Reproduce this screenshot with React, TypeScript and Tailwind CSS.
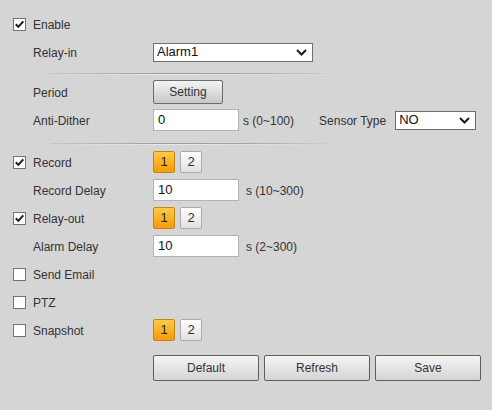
import React from "react";

const font = { fontFamily: '"Liberation Sans", Arial, sans-serif' };

function Check({ checked }: { checked: boolean }) {
  return (
    <div className="w-[13px] h-[13px] border border-[#737373] bg-white flex items-center justify-center shrink-0">
      {checked && (
        <svg width="11" height="11" viewBox="0 0 11 11">
          <path d="M1.8 5.3 L4.3 7.9 L9.3 2.3" fill="none" stroke="#1a1a1a" strokeWidth="2" />
        </svg>
      )}
    </div>
  );
}

function Chevron() {
  return (
    <svg width="11" height="7" viewBox="0 0 11 7" className="shrink-0">
      <path d="M1 1 L5.5 5.5 L10 1" fill="none" stroke="#1a1a1a" strokeWidth="2" />
    </svg>
  );
}

function Select({ value, w }: { value: string; w: string }) {
  return (
    <div className={`${w} h-[19px] border border-[#6f6f6f] bg-white flex items-center justify-between pl-[3px] pr-[5px] text-[13px] text-[#111]`}>
      <span>{value}</span>
      <Chevron />
    </div>
  );
}

function TextInput({ value }: { value: string }) {
  return (
    <div className="w-[86px] h-[22px] border border-[#b3b3b3] bg-white flex items-center pl-[4px] text-[13px] text-[#111]">
      {value}
    </div>
  );
}

function NumBtns() {
  return (
    <div className="flex gap-[5px]">
      <div className="w-[22px] h-[22px] rounded-[2px] border border-[#c48612] bg-[linear-gradient(#ffc947,#f59c08)] flex items-center justify-center text-[13px] text-[#222]">
        1
      </div>
      <div className="w-[22px] h-[22px] rounded-[2px] border border-[#ababab] bg-[linear-gradient(#fefefe,#e0e0e0)] flex items-center justify-center text-[13px] text-[#333]">
        2
      </div>
    </div>
  );
}

function Row({
  label,
  check,
  children,
}: {
  label: string;
  check?: boolean;
  children?: React.ReactNode;
}) {
  return (
    <div className="flex items-center h-[28px]">
      <div className="w-[153px] flex items-center pl-[13px] shrink-0">
        {check === undefined ? (
          <span className="pl-[20px] pt-[2px]">{label}</span>
        ) : (
          <>
            <Check checked={check} />
            <span className="ml-[7px] pt-[2px]">{label}</span>
          </>
        )}
      </div>
      {children}
    </div>
  );
}

function Divider({ top, h }: { top: string; h: string }) {
  return (
    <div className={`${h} ${top}`}>
      <div className="ml-[50px] w-[290px] h-[1px] bg-[linear-gradient(90deg,rgba(150,150,150,0.2),#9c9c9c_40%,#a8a8a8_70%,rgba(170,170,170,0))]" />
      <div className="ml-[50px] w-[290px] h-[1px] bg-[linear-gradient(90deg,rgba(255,255,255,0),rgba(235,235,235,0.9)_40%,rgba(230,230,230,0.5)_75%,rgba(255,255,255,0))]" />
    </div>
  );
}

function BigBtn({ label }: { label: string }) {
  return (
    <div className="w-[106px] h-[26px] rounded-[2px] border border-[#5e5e5e] bg-[linear-gradient(#f5f5f5,#d4d4d4)] flex items-center justify-center text-[12px] text-[#333]">
      {label}
    </div>
  );
}

export default function App() {
  return (
    <div style={font} className="w-[492px] h-[410px] bg-[#d5d5d5] text-[12px] text-[#333] pt-[10px] overflow-hidden">
      <Row label="Enable" check={true} />
      <Row label="Relay-in">
        <Select value="Alarm1" w="w-[160px]" />
      </Row>
      <Divider top="pt-[7px]" h="h-[12px]" />
      <Row label="Period">
        <div className="w-[70px] h-[24px] rounded-[2px] border border-[#6c6c6c] bg-[linear-gradient(#f4f4f4,#c6c6c6)] flex items-center justify-center text-[12px] text-[#333]">
          Setting
        </div>
      </Row>
      <Row label="Anti-Dither">
        <TextInput value="0" />
        <span className="ml-[4px] pt-[2px]">s (0~100)</span>
        <span className="ml-[25px] pt-[2px]">Sensor Type</span>
        <div className="ml-[9px]">
          <Select value="NO" w="w-[81px]" />
        </div>
      </Row>
      <Divider top="pt-[9px]" h="h-[14px]" />
      <Row label="Record" check={true}>
        <NumBtns />
      </Row>
      <Row label="Record Delay">
        <TextInput value="10" />
        <span className="ml-[7px] pt-[2px]">s (10~300)</span>
      </Row>
      <Row label="Relay-out" check={true}>
        <NumBtns />
      </Row>
      <Row label="Alarm Delay">
        <TextInput value="10" />
        <span className="ml-[7px] pt-[2px]">s (2~300)</span>
      </Row>
      <Row label="Send Email" check={false} />
      <Row label="PTZ" check={false} />
      <Row label="Snapshot" check={false}>
        <NumBtns />
      </Row>
      <div className="flex gap-[5px] pl-[153px] mt-[11px]">
        <BigBtn label="Default" />
        <BigBtn label="Refresh" />
        <BigBtn label="Save" />
      </div>
    </div>
  );
}
